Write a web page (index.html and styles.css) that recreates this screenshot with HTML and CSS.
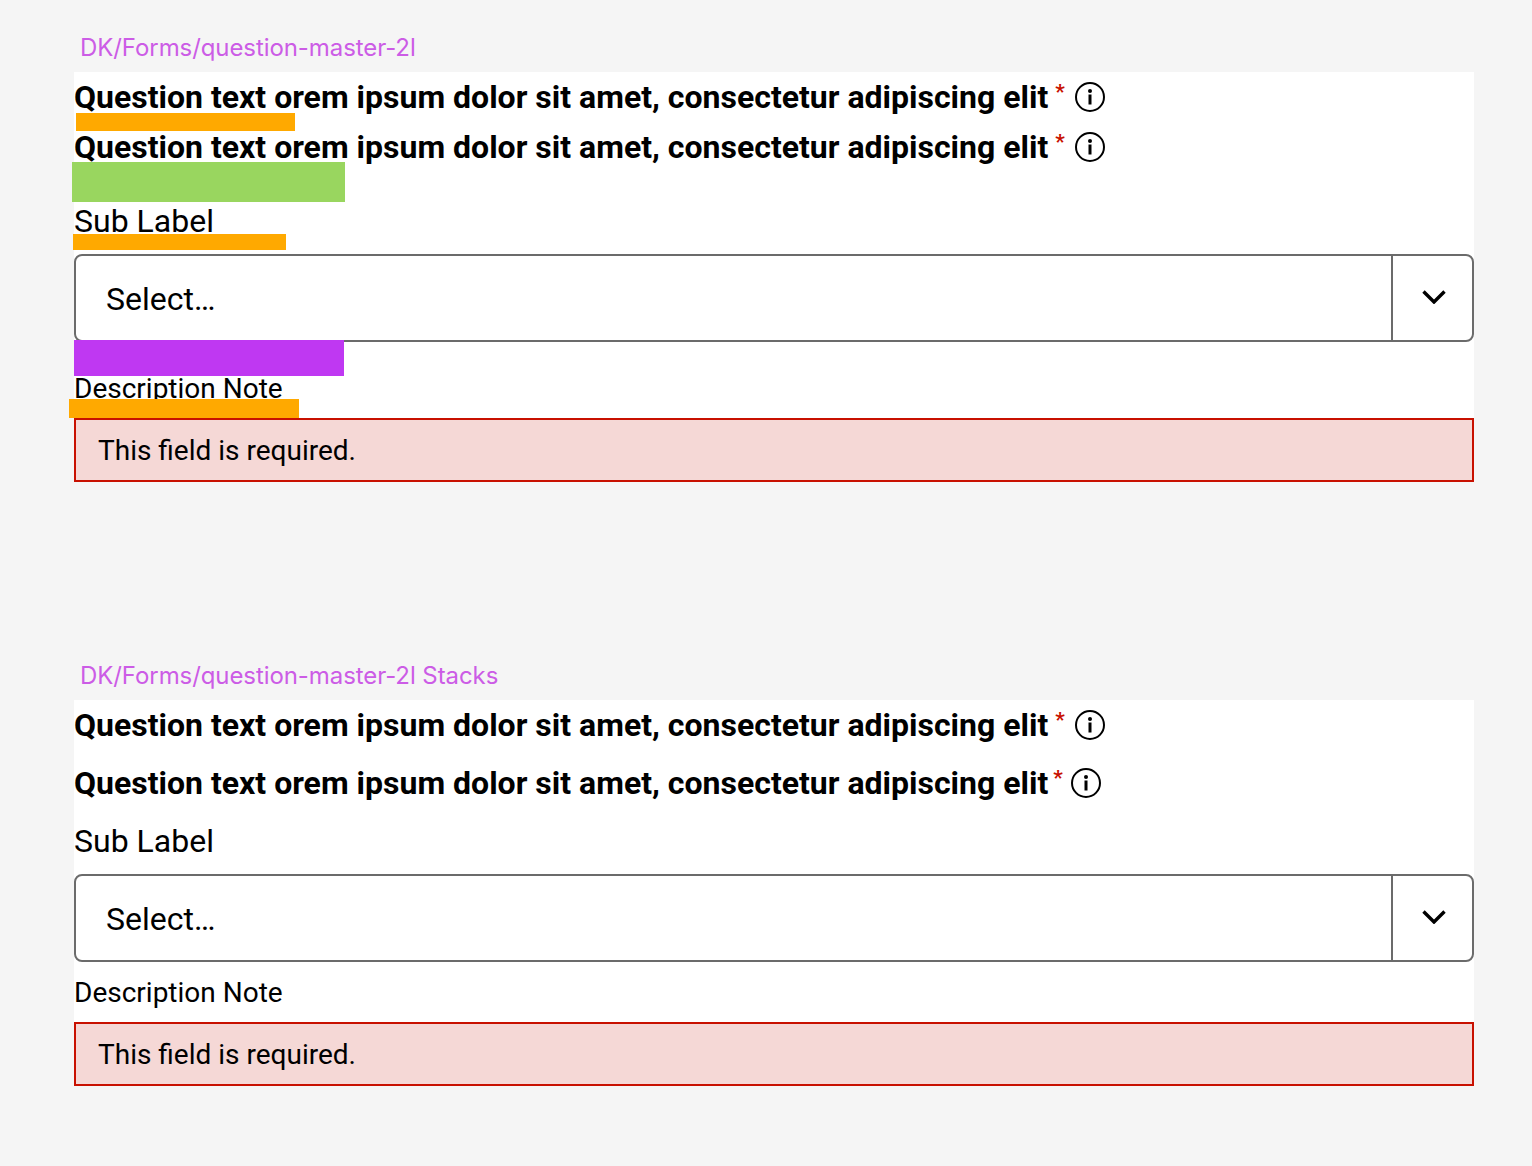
FILE: index.html
```html
<!DOCTYPE html>
<html lang="en">
<head>
<meta charset="utf-8">
<title>DK/Forms/question-master-2l</title>
<link rel="stylesheet" href="styles.css">
</head>
<body>
<svg class="sprite" aria-hidden="true">
  <symbol id="info" viewBox="0 0 30 30">
    <circle cx="15" cy="15" r="14" fill="none" stroke="#000" stroke-width="2"/>
    <circle cx="15" cy="9" r="2" fill="#000"/>
    <rect x="13.5" y="12.5" width="3" height="10" fill="#000"/>
  </symbol>
  <symbol id="chev" viewBox="0 0 24 14">
    <path d="M1.5 1.5 L12 12 L22.5 1.5" fill="none" stroke="#000" stroke-width="3.4"/>
  </symbol>
</svg>

<section class="section first">
  <div class="section-title">DK/Forms/question-master-2l</div>
  <div class="frame annotated">
    <div class="question"><span>Question text orem ipsum dolor sit amet, consectetur adipiscing elit</span><sup class="star">*</sup><svg class="info"><use href="#info"/></svg></div>
    <div class="question"><span>Question text orem ipsum dolor sit amet, consectetur adipiscing elit</span><sup class="star">*</sup><svg class="info"><use href="#info"/></svg></div>
    <div class="sub gap-30">Sub Label</div>
    <div class="select"><div class="select-value">Select…</div><div class="select-btn"><svg class="chev"><use href="#chev"/></svg></div></div>
    <div class="desc gap-34">Description Note</div>
    <div class="error">This field is required.</div>
    <i class="mark orange m1"></i>
    <i class="mark green m2"></i>
    <i class="mark orange m3"></i>
    <i class="mark purple m4"></i>
    <i class="mark orange m5"></i>
  </div>
</section>

<section class="section second">
  <div class="section-title">DK/Forms/question-master-2l Stacks</div>
  <div class="frame">
    <div class="question"><span>Question text orem ipsum dolor sit amet, consectetur adipiscing elit</span><sup class="star">*</sup><svg class="info"><use href="#info"/></svg></div>
    <div class="question tight gap-8"><span>Question text orem ipsum dolor sit amet, consectetur adipiscing elit</span><sup class="star">*</sup><svg class="info"><use href="#info"/></svg></div>
    <div class="sub gap-14">Sub Label</div>
    <div class="select"><div class="select-value">Select…</div><div class="select-btn"><svg class="chev"><use href="#chev"/></svg></div></div>
    <div class="desc gap-18">Description Note</div>
    <div class="error">This field is required.</div>
  </div>
</section>
</body>
</html>
```
FILE: styles.css
```css
* { box-sizing: border-box; }
html, body { margin: 0; padding: 0; }
body {
  background: #f5f5f5;
  width: 1532px;
  height: 1166px;
  overflow: hidden;
  font-family: Roboto, "Liberation Sans", sans-serif;
  color: #000;
  padding: 30px 58px 0 74px;
}
.sprite { display: none; }
.section-title {
  font-family: Inter, "Liberation Sans", sans-serif;
  font-size: 24px;
  letter-spacing: -0.08px;
  line-height: 36px;
  height: 42px;
  padding: 0 0 0 6px;
  color: #cc5ce6;
}
.second { margin-top: 176px; }
.frame {
  background: #fff;
  position: relative;
  width: 1400px;
  display: flex;
  flex-direction: column;
}
.question {
  display: flex;
  align-items: center;
  height: 50px;
  font-size: 32px;
  font-weight: 700;
  white-space: nowrap;
}
.star {
  color: #c81000;
  font-size: 21px;
  font-weight: 700;
  line-height: 1;
  margin: -10px 10px 0 7px;
  width: 10px;
}
.tight .star { margin: -10px 8px 0 5px; }
.info { width: 30px; height: 30px; flex: none; }
.sub {
  font-size: 32px;
  line-height: 38px;
  height: 38px;
}
.select {
  margin-top: 14px;
  height: 88px;
  border: 2px solid #6b6b6b;
  border-radius: 8px;
  display: flex;
  background: #fff;
}
.select-value {
  flex: 1;
  font-size: 32px;
  line-height: 86px;
  padding-left: 30px;
}
.select-btn {
  width: 81px;
  border-left: 2px solid #6b6b6b;
  display: flex;
  align-items: center;
  justify-content: center;
}
.chev { width: 24px; height: 14px; margin: -2px 0 0 2px; }
.desc {
  font-size: 28px;
  line-height: 26px;
  height: 24px;
}
.error {
  margin-top: 18px;
  height: 64px;
  background: #f5d8d6;
  border: 2px solid #c81000;
  font-size: 28px;
  line-height: 62px;
  padding-left: 22px;
}
.gap-8 { margin-top: 8px; }
.gap-14 { margin-top: 14px; }
.gap-18 { margin-top: 18px; }
.gap-30 { margin-top: 30px; }
.gap-34 { margin-top: 34px; }
.mark { position: absolute; display: block; }
.orange { background: #ffa900; }
.green { background: #99d65f; }
.purple { background: #bf38f2; }
.m1 { left: 2px; top: 41px; width: 219px; height: 18px; }
.m2 { left: -2px; top: 90px; width: 273px; height: 40px; }
.m3 { left: -1px; top: 162px; width: 213px; height: 16px; }
.m4 { left: 0; top: 268px; width: 270px; height: 36px; }
.m5 { left: -5px; top: 327px; width: 230px; height: 19px; }
```
